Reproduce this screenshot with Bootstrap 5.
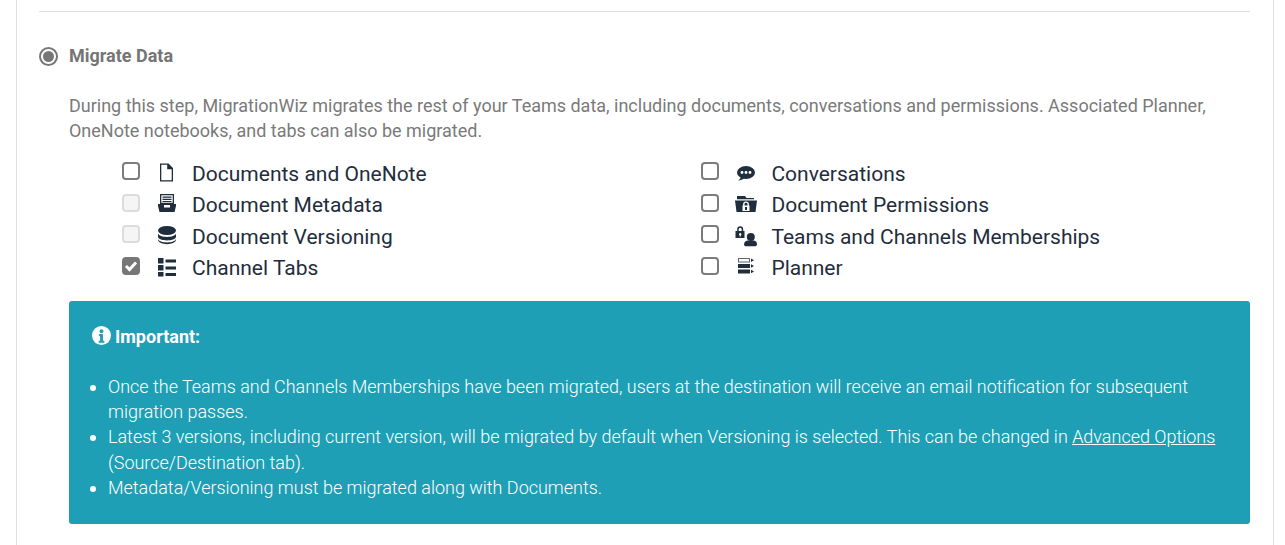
<!DOCTYPE html>
<html lang="en"><head><meta charset="utf-8"><title>Migrate Data</title>
<link rel="stylesheet" href="https://cdn.jsdelivr.net/npm/bootstrap@5.3.0/dist/css/bootstrap.min.css">
<style>
html,body{height:545px;overflow:hidden;background:#fff}
body{font-family:Roboto,sans-serif;color:#797979}
.shell{margin:0 11px 0 16px;height:545px;border-left:1px solid #e0e0e0;border-right:1px solid #e0e0e0;padding:11px 22px 0 22px}
.rule{height:1px;background:#dedede;margin-bottom:34px;margin-right:1px}
.step-head{height:20px;gap:11px;margin-bottom:27px}
.radio-dot{width:19px;height:19px;border:2px solid #777;border-radius:50%;padding:2px;flex:none}
.radio-dot i{display:block;width:11px;height:11px;background:#777;border-radius:50%}
.step-title{font-size:18px;font-weight:700;line-height:20px;color:#757575}
.step-text{margin:0 0 15.4px 30px;font-size:17.99px;line-height:25.2px;color:#7a7a7a}
.opts{margin-left:83px;display:grid;grid-template-columns:579.4px 1fr;grid-auto-rows:31.4px}
.opt{display:flex;align-items:center;color:#1f2d3d;font-size:21px;line-height:31px}
.opt .form-check-input{width:18px;height:18px;margin:0 0 6px 0;flex:none;border:2px solid #7c7c7c;border-radius:4px}
.opt .form-check-input:disabled{opacity:1;background-color:#f5f5f5;border-color:#dcdcdc}
.opt .form-check-input:checked{background-color:#777;border-color:#777;background-size:14px;background-image:url("data:image/svg+xml,%3csvg xmlns='http://www.w3.org/2000/svg' viewBox='0 0 14 14'%3e%3cpath fill='none' stroke='%23fff' stroke-width='3' d='M2 7l3.500 3.500L12 3.500'/%3e%3c/svg%3e")}
.ico{width:22px;height:22px;margin:0 14px 2px 16px;flex:none;fill:#1f2d3d}
.note{margin:16.6px 1px 0 30px;height:223px;background:#1e9fb5;color:#fff;border-radius:3px;padding:25px 23px 0;font-size:17.98px;line-height:25.2px;font-weight:300}
.note-h{font-weight:700;font-size:18px;line-height:22px;display:flex;align-items:center;gap:4px;margin-bottom:26px}
.note-h svg{margin-bottom:2px}
.note ul{margin:0;padding-left:16px}
.note a{color:#fff}
</style></head><body>
<div class="shell">
<div class="rule"></div>
<div class="d-flex align-items-center step-head"><span class="radio-dot"><i></i></span><span class="step-title">Migrate Data</span></div>
<p class="step-text">During this step, MigrationWiz migrates the rest of your Teams data, including documents, conversations and permissions. Associated Planner, OneNote notebooks, and tabs can also be migrated.</p>
<div class="opts">
<label class="opt"><input class="form-check-input" type="checkbox"><svg class="ico" viewBox="0 0 22 22"><path fill-rule="evenodd" d="M4 1.500h8.500L17 6v13.500H4z M5.300 2.800v15.400h10.400V7.200h-4.500V2.800z"/></svg>Documents and OneNote</label>
<label class="opt"><input class="form-check-input" type="checkbox"><svg class="ico" viewBox="0 0 22 22"><ellipse cx="11" cy="10.500" rx="9" ry="6.500"/><path d="M6 14c0 2-1.500 3.500-3 4.500 2.500 0 5-1 6.500-2.500z"/><circle cx="7" cy="10.500" r="1.400" fill="#fff"/><circle cx="11" cy="10.500" r="1.400" fill="#fff"/><circle cx="15" cy="10.500" r="1.400" fill="#fff"/></svg>Conversations</label>
<label class="opt"><input class="form-check-input" type="checkbox" disabled><svg class="ico" viewBox="0 0 22 22"><path fill-rule="evenodd" d="M4 0h14v10H4z M5.300 1.300v7.400h11.400V1.300z"/><path d="M6.500 2.500h9v1.200h-9z M6.500 4.700h9v1.200h-9z M6.500 6.900h9v1.200h-9z"/><path fill-rule="evenodd" d="M2 10h18v2l-1.500 6h-15L2 12z M8 11v2.500h6V11z"/></svg>Document Metadata</label>
<label class="opt"><input class="form-check-input" type="checkbox"><svg class="ico" viewBox="0 0 22 22"><path d="M2 2h8l1.500 2H19v1.200H2z"/><path d="M0 6.500h22L20.500 18h-19z"/><path d="M7.500 11.500h7V17h-7z" fill="#fff"/><path d="M8.800 12V10.300a2.200 2.200 0 0 1 4.400 0V12" fill="none" stroke="#fff" stroke-width="1.400"/><path d="M10 13h2v3h-2z"/></svg>Document Permissions</label>
<label class="opt"><input class="form-check-input" type="checkbox" disabled><svg class="ico" viewBox="0 0 22 22"><ellipse cx="11" cy="5.500" rx="9" ry="4.500"/><path d="M2 8.500c1 4.500 17 4.500 18 0v3.500c-1 4.500-17 4.500-18 0z M2 14c1 4.500 17 4.500 18 0v1c-1 5.500-17 5.500-18 0z"/></svg>Document Versioning</label>
<label class="opt"><input class="form-check-input" type="checkbox"><svg class="ico" viewBox="0 0 22 22"><path fill-rule="evenodd" d="M.5 6h1.700V4.200a3 3 0 0 1 6 0V6H9.500v7H.5z M3.700 6h3V4.200a1.500 1.500 0 0 0-3 0z M5.200 8a1.200 1.200 0 0 0-.6 2.200V11.500h1.200V10.200A1.200 1.200 0 0 0 5.200 8z"/><circle cx="15.800" cy="12" r="4"/><path d="M9 19.500c0-2.500 2-4 4-4h5.500c2 0 3.500 1.500 3.500 4 0 1-1 1.800-2 1.800H11c-1 0-2-.8-2-1.800z"/></svg>Teams and Channels Memberships</label>
<label class="opt"><input class="form-check-input" type="checkbox" checked><svg class="ico" viewBox="0 0 22 22"><path d="M2 1h5.500v5.500H2z M9.500 2.500H20v3H9.500z M2 8h5.500v5.500H2z M9.500 9.500H20v3H9.500z M2 15h5.500v4.500H2z M9.500 16H20v3H9.500z"/></svg>Channel Tabs</label>
<label class="opt"><input class="form-check-input" type="checkbox"><svg class="ico" viewBox="0 0 22 22"><path fill-rule="evenodd" fill="#5b6570" d="M3 1h12v4.500H3z M4 2v2.500h10V2z"/><path d="M16 1.500l3 1.700-3 1.800z M3 7h12v4H3z M16 7.300l3 1.700-3 1.700z M3 12.500h12v4H3z M16 12.800l3 1.700-3 1.700z"/></svg>Planner</label>
</div>
<div class="note">
<div class="note-h"><svg width="19" height="19" viewBox="0 0 20 20"><circle cx="10" cy="10" r="10" fill="#fff"/><circle cx="10" cy="5.500" r="2" fill="#1e9fb5"/><path d="M7.500 8.500h4v7h1.500v2H7v-2h1.500v-5h-1z" fill="#1e9fb5"/></svg>Important:</div>
<ul>
<li>Once the Teams and Channels Memberships have been migrated, users at the destination will receive an email notification for subsequent migration passes.</li>
<li>Latest 3 versions, including current version, will be migrated by default when Versioning is selected. This can be changed in <a href="#">Advanced Options</a> (Source/Destination tab).</li>
<li>Metadata/Versioning must be migrated along with Documents.</li>
</ul>
</div>
</div>
<script src="https://cdn.jsdelivr.net/npm/bootstrap@5.3.0/dist/js/bootstrap.bundle.min.js"></script>
</body></html>
